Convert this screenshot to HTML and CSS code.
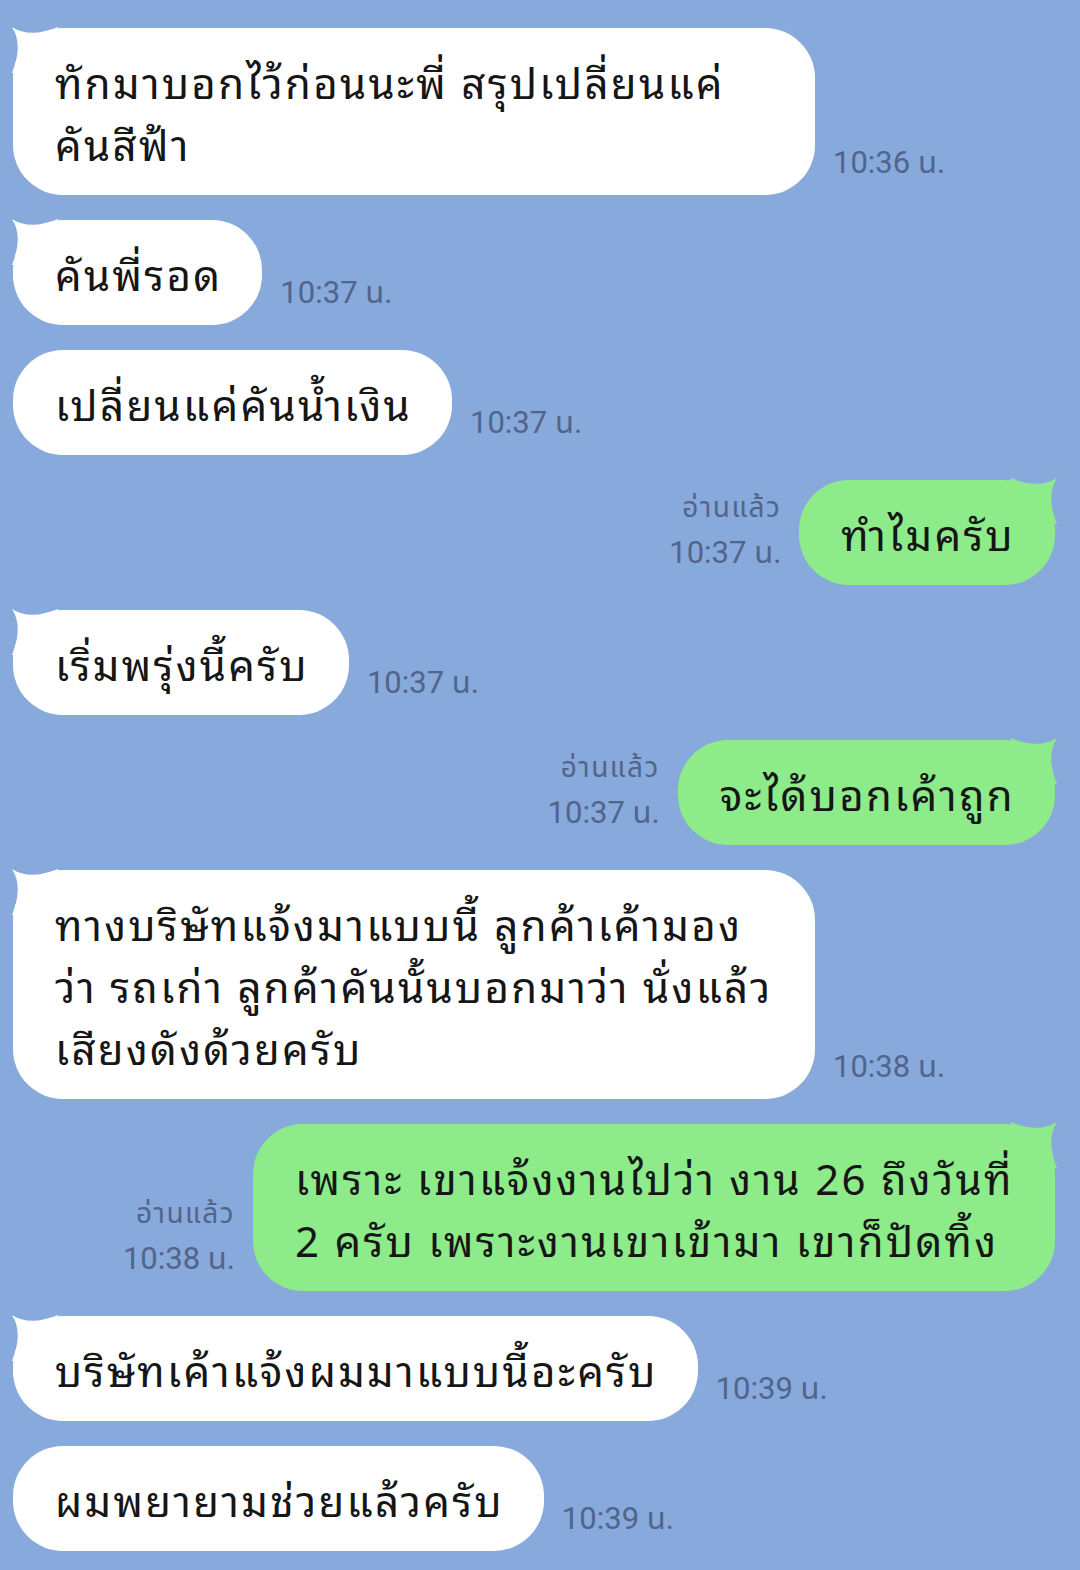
FILE: index.html
```html
<!DOCTYPE html>
<html lang="th">
<head>
    <meta charset="UTF-8">
    <meta name="viewport" content="width=device-width, initial-scale=1.0">
    <title>แชท</title>
    <link rel="stylesheet" href="styles.css">
</head>
<body>
    <main class="chat">
        <div class="row in">
            <div class="bubble wide">
                <svg class="tail" viewBox="0 0 36 36"><path d="M0 0 Q14 9 36 0 L36 36 L0 36 Q9 14 0 0 Z"/></svg>
                ทักมาบอกไว้ก่อนนะพี่ สรุปเปลี่ยนแค่<br>คันสีฟ้า
            </div>
            <div class="meta"><span class="time">10:36 น.</span></div>
        </div>

        <div class="row in">
            <div class="bubble">
                <svg class="tail" viewBox="0 0 36 36"><path d="M0 0 Q14 9 36 0 L36 36 L0 36 Q9 14 0 0 Z"/></svg>
                คันพี่รอด
            </div>
            <div class="meta"><span class="time">10:37 น.</span></div>
        </div>

        <div class="row in">
            <div class="bubble">เปลี่ยนแค่คันน้ำเงิน</div>
            <div class="meta"><span class="time">10:37 น.</span></div>
        </div>

        <div class="row out">
            <div class="meta"><span class="read">อ่านแล้ว</span><span class="time">10:37 น.</span></div>
            <div class="bubble">
                <svg class="tail" viewBox="0 0 36 36"><path d="M36 0 Q22 9 0 0 L0 36 L36 36 Q27 14 36 0 Z"/></svg>
                ทำไมครับ
            </div>
        </div>

        <div class="row in">
            <div class="bubble">
                <svg class="tail" viewBox="0 0 36 36"><path d="M0 0 Q14 9 36 0 L36 36 L0 36 Q9 14 0 0 Z"/></svg>
                เริ่มพรุ่งนี้ครับ
            </div>
            <div class="meta"><span class="time">10:37 น.</span></div>
        </div>

        <div class="row out">
            <div class="meta"><span class="read">อ่านแล้ว</span><span class="time">10:37 น.</span></div>
            <div class="bubble">
                <svg class="tail" viewBox="0 0 36 36"><path d="M36 0 Q22 9 0 0 L0 36 L36 36 Q27 14 36 0 Z"/></svg>
                จะได้บอกเค้าถูก
            </div>
        </div>

        <div class="row in">
            <div class="bubble wide">
                <svg class="tail" viewBox="0 0 36 36"><path d="M0 0 Q14 9 36 0 L36 36 L0 36 Q9 14 0 0 Z"/></svg>
                ทางบริษัทแจ้งมาแบบนี้ ลูกค้าเค้ามอง<br>ว่า รถเก่า ลูกค้าคันนั้นบอกมาว่า นั่งแล้ว<br>เสียงดังด้วยครับ
            </div>
            <div class="meta"><span class="time">10:38 น.</span></div>
        </div>

        <div class="row out">
            <div class="meta"><span class="read">อ่านแล้ว</span><span class="time">10:38 น.</span></div>
            <div class="bubble wide">
                <svg class="tail" viewBox="0 0 36 36"><path d="M36 0 Q22 9 0 0 L0 36 L36 36 Q27 14 36 0 Z"/></svg>
                เพราะ เขาแจ้งงานไปว่า งาน 26 ถึงวันที่<br>2 ครับ เพราะงานเขาเข้ามา เขาก็ปัดทิ้ง
            </div>
        </div>

        <div class="row in">
            <div class="bubble">
                <svg class="tail" viewBox="0 0 36 36"><path d="M0 0 Q14 9 36 0 L36 36 L0 36 Q9 14 0 0 Z"/></svg>
                บริษัทเค้าแจ้งผมมาแบบนี้อะครับ
            </div>
            <div class="meta"><span class="time">10:39 น.</span></div>
        </div>

        <div class="row in">
            <div class="bubble">ผมพยายามช่วยแล้วครับ</div>
            <div class="meta"><span class="time">10:39 น.</span></div>
        </div>
    </main>
</body>
</html>
```

FILE: styles.css
```css
html, body {
    margin: 0;
    padding: 0;
}

body {
    background-color: #87a9db;
    font-family: "Noto Sans Thai Looped", "Noto Sans Thai", Tahoma, "Noto Sans", sans-serif;
    color: #161616;
    width: 1080px;
    height: 1570px;
    overflow: hidden;
}

.chat {
    display: flex;
    flex-direction: column;
    gap: 25px;
    padding: 28px 25px 0 13px;
}

.row {
    display: flex;
    align-items: flex-end;
    gap: 18px;
}

.row.out {
    justify-content: flex-end;
}

.bubble {
    position: relative;
    background-color: #ffffff;
    border-radius: 50px;
    padding: 21px 40px 22px 42px;
    font-size: 42px;
    line-height: 62px;
    letter-spacing: 2.3px;
    white-space: nowrap;
}

.row.out .bubble {
    background-color: #8deb8a;
}

.bubble.wide {
    width: 720px;
}

.tail {
    position: absolute;
    width: 46px;
    height: 46px;
    fill: #ffffff;
}

.row.in .tail {
    left: -1px;
    top: -1px;
}

.row.out .tail {
    right: -2px;
    top: -2px;
    fill: #8deb8a;
}

.meta {
    display: flex;
    flex-direction: column;
    align-items: flex-end;
    gap: 13px;
    margin-bottom: 16px;
    color: #52648a;
    font-family: Roboto, "Noto Sans Thai", sans-serif;
}

.row.in .meta {
    align-items: flex-start;
}

.time {
    font-size: 31px;
    line-height: 32px;
    white-space: nowrap;
}

.read {
    font-size: 28px;
    line-height: 32px;
    letter-spacing: 1.5px;
    white-space: nowrap;
}
```
